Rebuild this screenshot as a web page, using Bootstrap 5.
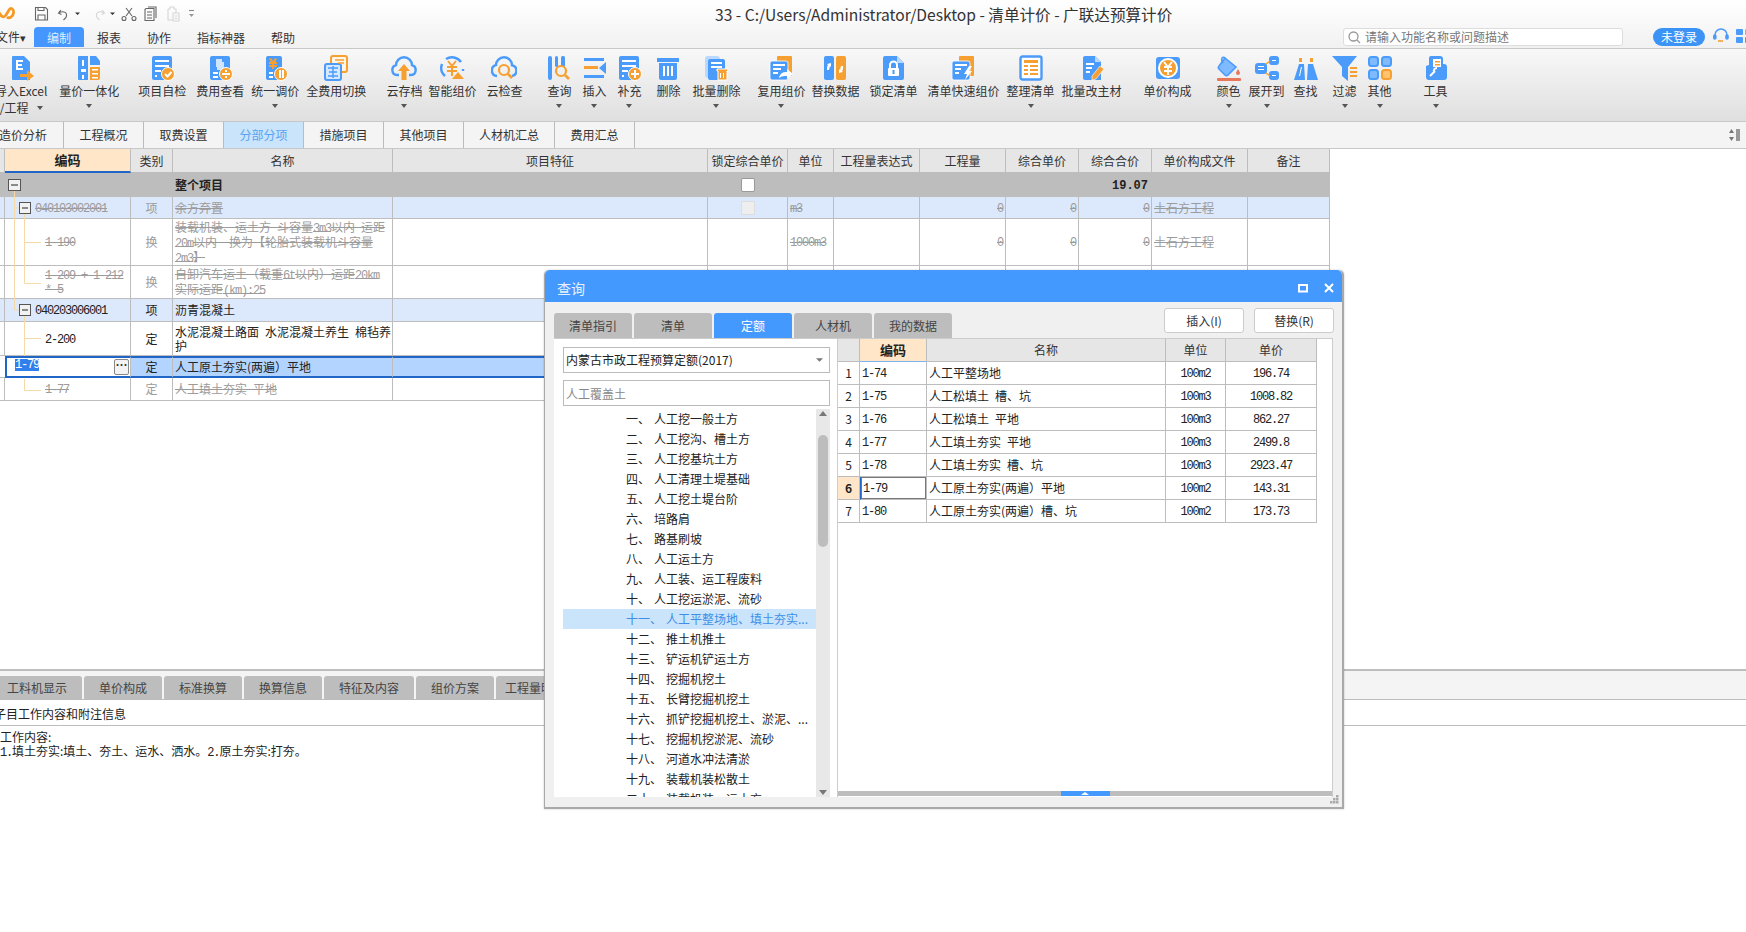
<!DOCTYPE html>
<html lang="zh-CN">
<head>
  <meta charset="UTF-8">
  <title>33 - 清单计价 - 广联达预算计价</title>
  <link href="https://cdn.jsdelivr.net/npm/bootstrap@5.3.3/dist/css/bootstrap.min.css" rel="stylesheet">
  <style>
    body{margin:0;width:1746px;height:932px;overflow:hidden;background:#fff;color:#222;font:12px/14px "Noto Sans CJK SC","Liberation Sans",sans-serif;position:relative}
    .mono{font-family:"Liberation Mono","Noto Sans CJK SC",monospace;font-size:12px;letter-spacing:-1.2px}
    span.mono{line-height:1}

    /* title + menu */
    .app-top{height:49px;background:linear-gradient(#fff,#f1f1f1);border-bottom:1px solid #c8c8c8}
    .top-row{height:27px}
    .quick-ico{margin-left:34px;width:170px;height:16px}
    .app-title{margin-left:511px;font-size:15.600px;color:#333;white-space:nowrap}
    .menu-row{height:21px}
    .menu-row .nav-link{padding:3px 0 0;color:#333;font-size:12px;line-height:15px;margin-left:26px}
    .menu-file{margin-left:-4px;width:38px;padding-top:3px;color:#333}
    .menu-row .nav-link.now{background:#4596ff;color:#dfeeff;width:50px;height:20px;margin:0 -13px 0 0;text-align:center;border-radius:4px 4px 0 0}
    .search-box{width:280px;height:18px;background:#fff;border:1px solid #ddd;border-radius:3px;color:#777;line-height:16px;padding-left:4px}
    .login-pill{width:52px;height:18px;margin-left:30px;background:#3b93f5;color:#fff;border-radius:9px;text-align:center;line-height:18px}
    .top-end{margin-right:-6px;padding-top:1px}

    /* ribbon */
    .ribbon{height:73px;background:linear-gradient(#f8f8f8,#dfdfdf);border-bottom:1px solid #c8c8c8;padding-top:6px;margin-left:-5px}
    .rb-btn{display:flex;flex-direction:column;align-items:center;white-space:nowrap;color:#333;flex:none}
    .rb-btn svg{width:26px;height:26px;display:block;margin-bottom:3px}
    .rb-caret{width:0;height:0;border:3px solid transparent;border-top:4px solid #555;border-bottom:0;margin-top:6px}
    .rb-line2{margin-top:3px}
    .g6{margin-left:6px}.g7{margin-left:7px}.g8{margin-left:8px}.g9{margin-left:9px}.g10{margin-left:10px}.g11{margin-left:11px}.g12{margin-left:12px}.g13{margin-left:13px}
    .g17{margin-left:17px}.g19{margin-left:19px}.g20{margin-left:20px}.g22{margin-left:22px}.g24{margin-left:24px}.g30{margin-left:30px}

    /* page tabs */
    .page-tabs{height:27px;background:#f4f4f4;border-bottom:1px solid #c8c8c8;position:relative}
    .page-tabs .nav-link{height:26px;line-height:26px;padding:0;width:80px;text-align:center;color:#333;border-right:1px solid #bbb}
    .page-tabs .nav-link.first{width:64px;text-align:left;text-indent:-1px}
    .page-tabs .nav-link.wide{width:91px}
    .page-tabs .nav-link.now{background:#c9e4fb;color:#5aa3f0}
    .side-ico{width:14px;height:14px}

    /* grids */
    .pj-grid{--bs-table-bg:transparent;--bs-table-color:#222;border-collapse:separate;border-spacing:0;table-layout:fixed;margin:0;font-size:12px;line-height:14px}
    .pj-grid>:not(caption)>*>*{padding:0 2px;border:0;border-right:1px solid #bdbdbd;border-bottom:1px solid #bdbdbd;color:inherit;overflow:hidden;white-space:nowrap;vertical-align:middle}
    .pj-grid>tbody>tr>td.mono{padding-top:2px}
    .pj-grid thead tr{background:#e6e6e6;color:#333}
    .pj-grid th{font-weight:400;text-align:center}
    .pj-grid>thead>tr>th.hot{background:#ffe6c8;font-weight:700;font-size:13px;color:#222}
    .grid-area{height:520px;position:relative;overflow:hidden}
    .main-grid{width:1330px}
    .main-grid>thead>tr{height:24px}
    .main-grid>thead>tr>th.hot{border-bottom:2px solid #1f66c8}
    .main-grid col:nth-child(1){width:5px}.main-grid col:nth-child(2){width:126px}.main-grid col:nth-child(3){width:42px}
    .main-grid col:nth-child(4){width:220px}.main-grid col:nth-child(5){width:315px}.main-grid col:nth-child(6){width:80px}
    .main-grid col:nth-child(7){width:46px}.main-grid col:nth-child(8){width:86px}.main-grid col:nth-child(9){width:86px}
    .main-grid col:nth-child(10){width:73px}.main-grid col:nth-child(11){width:73px}.main-grid col:nth-child(12){width:96px}.main-grid col:nth-child(13){width:82px}
    .h22{height:22px}.h23{height:23px}.h24{height:24px}.h33{height:33px}.h34{height:34px}.h47{height:47px}
    .row-root{background:#bdbdbd;font-weight:700}
    .sum-val{letter-spacing:0;padding-right:3px!important}
    .row-list{background:#dce9fc}
    .row-gone{color:#9b9b9b}
    .row-gone .strk{text-decoration:line-through}
    .kind{text-align:center}
    .code-1{padding-left:30px!important}
    .code-2{padding-left:40px!important}
    .row-sel{background:#b3d4ff}
    .pj-grid>tbody>tr.row-sel>td{border-top:2px solid #1f66c8;border-bottom:2px solid #1f66c8;vertical-align:top}
    .pj-grid>tbody>tr.row-sel>td.blank{background:#fff;border:0;border-bottom:1px solid #bdbdbd}
    .pj-grid>tbody>tr.row-sel>td.sel-code{background:#fff;border-left:2px solid #1f66c8;padding-left:8px;color:#fff}
    .pj-grid>tbody>tr.row-sel>td.mid{vertical-align:middle}
    .sel-txt{background:#2f80ed;display:inline-block;width:24px;height:12px;line-height:12px;margin-top:1px}
    .more-btn{width:15px;height:16px;line-height:10px;background:#f3f3f3;border:1px solid #888;border-radius:2px;color:#333;text-align:center;margin-top:1px;margin-right:-1px;font-weight:700}
    .chk-box{display:block;width:14px;height:14px;margin:auto;background:#fff;border:1px solid #999;border-radius:2px}
    .row-gone .chk-box{background:#eee;border-color:#ddd}
    .tree-lines{position:absolute;left:0;top:0;width:60px;height:260px}

    /* lower panel */
    .lower-tabs{height:31px;border-top:2px solid #bdbdbd;border-bottom:1px solid #bdbdbd;background:#f4f4f4;padding-top:5px;gap:2px}
    .lower-tabs .nav-link{width:78px;height:24px;line-height:24px;padding:0;background:#bdbdbd;color:#444;text-align:center;border-radius:3px 3px 0 0}
    .lower-tabs .nav-link.first{width:82px;padding-right:8px;border-radius:0 3px 0 0}
    .lower-tabs .nav-link.wider{width:90px}
    .note-head-wrap{border-bottom:1px solid #bdbdbd;height:26px;overflow:hidden}
    .note-head{height:26px;line-height:28px;margin-left:-6px;color:#222}
    .note-body{line-height:14px;padding-top:4px;color:#222}

    /* query window */
    .qd-win{position:absolute;left:544px;top:270px;width:800px;height:539px;background:#f0f0f0;border:1px solid #a9a9a9;border-width:0 2px 2px 1px;border-radius:5px 5px 0 0;box-shadow:0 0 2px rgba(0,0,0,.25);display:flex;flex-direction:column}
    .qd-title{height:32px;flex:none;background:#4499ff;color:#e8f2ff;font-size:14px;border-radius:5px 5px 0 0;padding-left:12px;padding-top:3px}
    .qd-title svg{width:10px;height:10px}
    .qd-bar{height:36px;flex:none;padding-left:9px;padding-right:8px}
    .qd-tabs{gap:2px;margin-top:11px}
    .qd-tabs .nav-link{width:78px;height:25px;line-height:25px;padding:0;background:#bdbdbd;color:#444;text-align:center;border-radius:3px 3px 0 0}
    .qd-tabs .nav-link.now{background:#4499ff;color:#fff}
    .qd-actions{gap:10px}
    .qd-btn{width:80px;height:25px;padding:0;font-size:12px;line-height:23px;background:#fff;border:1px solid #ccc;border-radius:3px;color:#333;margin-top:6px}
    .qd-main{height:459px;flex:none;margin:0 9px 0 9px;background:#fff;border-top:1px solid #ccc}
    .qd-left{width:283px;padding:8px 7px 0 9px;flex:none;display:flex;flex-direction:column;overflow:hidden}
    .qd-select{height:26px;font-size:12px;line-height:14px;padding:0 14px 0 2px;border:1px solid #bbb;border-radius:0;color:#222;background-image:url("data:image/svg+xml,%3csvg xmlns='http://www.w3.org/2000/svg' viewBox='0 0 8 4'%3e%3cpath fill='%23777' d='M0 0h8L4 4z'/%3e%3c/svg%3e");background-size:7px 4px;background-position:right 6px center;font-family:inherit}
    .qd-input{height:26px;margin-top:7px;font-size:12px;padding:0 2px;border:1px solid #bbb;border-radius:0;color:#888;font-family:inherit}
    .qd-listwrap{flex:1;min-height:0;margin-top:3px;overflow:hidden}
    .qd-list{width:253px;margin:0;overflow:hidden}
    .qd-list li{height:20px;line-height:20px;padding-left:63px;color:#222;white-space:nowrap}
    .qd-list li.now{background:#c9e4fb;color:#3f8fe8}
    .qd-scroll{width:14px;background:#e8e8e8;flex:none;position:relative}
    .qd-thumb{position:absolute;left:2px;top:26px;width:10px;height:112px;background:#bdbdbd;border-radius:5px}
    .arrow-up,.arrow-dn{position:absolute;left:3px;width:0;height:0;border:4px solid transparent}
    .arrow-up{top:2px;border-top:0;border-bottom:5px solid #777}
    .arrow-dn{bottom:2px;border-bottom:0;border-top:5px solid #777}
    .qd-right{flex:1;min-width:0;border-left:1px solid #ccc;border-right:1px solid #ccc;display:flex;flex-direction:column}
    .quota-grid{width:479px}
    .quota-grid col:nth-child(1){width:22px}.quota-grid col:nth-child(2){width:67px}.quota-grid col:nth-child(3){width:239px}.quota-grid col:nth-child(4){width:60px}.quota-grid col:nth-child(5){width:91px}
    .quota-grid tr{height:23px}
    .quota-grid>thead>tr{height:23px}
    .quota-grid>thead>tr>th.hot{border-bottom:1px solid #7db4ee}
    .quota-grid>tbody>tr>td:first-child{background:#fff;text-align:center}
    .quota-grid>tbody>tr>td.rn-now{background:#ffe6c8;font-weight:700}
    .pj-grid>tbody>tr>td.cell-now{box-shadow:inset 0 0 0 1px #777;border-left:1px solid #1f66c8}
    .h-bar{height:5px;background:#bdbdbd;margin-top:auto;margin-bottom:1px;display:flex;justify-content:center;flex:none}
    .h-thumb{width:49px;background:#4499ff;position:relative}
    .h-thumb::after{content:"";position:absolute;left:20px;top:1px;border:4px solid transparent;border-top:0;border-bottom:3px solid #fff}
    .qd-grip{position:absolute;right:3px;bottom:3px;width:9px;height:9px}
  </style>
</head>
<body>
  <svg width="0" height="0" class="d-block position-absolute">
    <defs>
      <symbol id="i-import" viewBox="0 0 26 26"><path fill="#4a9bfa" d="M5 1h11l6 6v18H5a1 1 0 0 1-1-1V2a1 1 0 0 1 1-1z"/><path fill="#fff" d="M8 5h7v2h-5v2h4v2h-4v2h5v2H8z"/><path fill="#f5a030" d="M12 19h7v-4l7 6-7 5v-4h-7z"/></symbol>
      <symbol id="i-merge" viewBox="0 0 26 26"><path fill="#4a9bfa" d="M3 1h9v24H3a1 1 0 0 1-1-1V2a1 1 0 0 1 1-1zM14 1h6l4 5v4H14z"/><path fill="#f5a030" d="M14 12h10v11a2 2 0 0 1-2 2h-8z"/><path fill="#fff" d="M6 5h2v6H6zM5 14h5v3H5zM6 20h2v4H6zM16 14h6v1.500h-6zM16 18h6v1.500h-6zM16 22h6v1.500h-6z"/></symbol>
      <symbol id="i-check" viewBox="0 0 26 26"><rect x="3" y="1" width="20" height="24" rx="2" fill="#4a9bfa"/><path fill="#fff" d="M6 5h14v2H6zM6 10h14v2H6zM6 15h6v2H6zM6 20h2v2H6z"/><circle cx="19" cy="19" r="6.500" fill="#f5a030" stroke="#fff"/><path fill="none" stroke="#fff" stroke-width="2" d="M16 19l2.500 2.500 4-4.500"/></symbol>
      <symbol id="i-fee" viewBox="0 0 26 26"><rect x="3" y="1" width="20" height="24" rx="2" fill="#4a9bfa"/><path fill="#cfe4ff" d="M9 4h6v3h2v8H10v-3H9z"/><path fill="#fff" d="M6 17h5v2H6zM6 21h5v2H6z"/><circle cx="19" cy="19" r="6.500" fill="#f5a030" stroke="#fff"/><path fill="#fff" d="M15 18h8v2h-8zM18 15h2v2h-2zM18 21h2v2h-2z"/></symbol>
      <symbol id="i-tune" viewBox="0 0 26 26"><rect x="4" y="1" width="16" height="24" rx="2" fill="#4a9bfa"/><path fill="#f5a030" d="M7 4l2-1 2 3 2-3 2 1-2 3h2v2h-3v1h3v2h-3v2h-2v-2H7v-2h3V9H7V7h2z"/><path fill="#fff" d="M7 17h4v2H7zM7 21h4v2H7z"/><circle cx="19" cy="19" r="6.500" fill="#f5a030" stroke="#fff"/><path fill="#fff" d="M17 15h2v8h-2zM20 15h2v8h-2z"/></symbol>
      <symbol id="i-allfee" viewBox="0 0 26 26"><rect x="8" y="1" width="16" height="16" rx="2" fill="#fff6e8" stroke="#f5a030" stroke-width="2"/><rect x="2" y="9" width="16" height="16" rx="2" fill="#d6e8ff" stroke="#4a9bfa" stroke-width="2"/><path fill="none" stroke="#4a9bfa" stroke-width="1.400" d="M5 13h10M6 17h8M5 21h10M10 11v12"/><path fill="none" stroke="#f5a030" stroke-width="1.400" d="M12 5h9M15 8h6"/></symbol>
      <symbol id="i-cloud" viewBox="0 0 26 26"><path fill="none" stroke="#4a9bfa" stroke-width="2.400" d="M8 20H6a5 5 0 0 1-1-9.800 8 8 0 0 1 16 0A5 5 0 0 1 20 20h-2"/><path fill="#f5a030" d="M13 9l6 7h-3.500v9h-5v-9H7z"/></symbol>
      <symbol id="i-smart" viewBox="0 0 26 26"><path fill="none" stroke="#4a9bfa" stroke-width="2.400" d="M6 21A11 11 0 0 1 3 9M7 4a11 11 0 0 1 15 3M24 14l0 2"/><path fill="none" stroke="#f5a030" stroke-width="2" d="M9 6l4 5 4-5M8 12h10M8 16h10M13 11v10"/><path fill="#f5a030" d="M19 17l6 7H13z"/></symbol>
      <symbol id="i-cloudchk" viewBox="0 0 26 26"><path fill="none" stroke="#4a9bfa" stroke-width="2.400" d="M6 21a5.500 5.500 0 0 1-1-10.800 8 8 0 0 1 16 0A5.500 5.500 0 0 1 21 21"/><circle cx="13" cy="15" r="5" fill="none" stroke="#f5a030" stroke-width="2.200"/><path stroke="#f5a030" stroke-width="2.600" d="M17 19l4 4"/></symbol>
      <symbol id="i-query" viewBox="0 0 26 26"><rect x="2" y="1" width="4" height="24" rx="2" fill="#4a9bfa"/><rect x="9" y="1" width="3" height="11" rx="1.500" fill="#4a9bfa"/><rect x="15" y="1" width="4" height="11" rx="1.500" fill="#4a9bfa"/><circle cx="15" cy="16" r="5" fill="none" stroke="#f5a030" stroke-width="2.200"/><path stroke="#f5a030" stroke-width="2.600" d="M19 20l4 4"/></symbol>
      <symbol id="i-insert" viewBox="0 0 26 26"><path fill="#4a9bfa" d="M3 3h20v3H3zM3 20h20v3H3z"/><path fill="#f5a030" d="M3 11h14v3H3z"/><path fill="#4a9bfa" d="M25 7v12l-7-6z"/></symbol>
      <symbol id="i-add" viewBox="0 0 26 26"><rect x="3" y="1" width="20" height="24" rx="2" fill="#4a9bfa"/><path fill="#fff" d="M6 5h14v2H6zM6 10h14v2H6zM6 15h6v2H6zM6 20h2v2H6z"/><circle cx="19" cy="19" r="6.500" fill="#f5a030" stroke="#fff"/><path fill="#fff" d="M15 18h8v2h-8zM18 15h2v8h-2z"/></symbol>
      <symbol id="i-del" viewBox="0 0 26 26"><path fill="#4a9bfa" d="M2 3h22v4H2zM4 8h18v15a2 2 0 0 1-2 2H6a2 2 0 0 1-2-2z"/><path fill="#fff" d="M8 11h2v10H8zM12 11h2v10h-2zM16 11h2v10h-2z"/></symbol>
      <symbol id="i-batchdel" viewBox="0 0 26 26"><rect x="2" y="1" width="15" height="22" rx="3" fill="#b9d8ff"/><rect x="5" y="4" width="17" height="21" rx="2" fill="#4a9bfa"/><path fill="#fff" d="M8 7h11v2H8zM8 11h11v2H8z"/><path fill="#f5a030" stroke="#fff" d="M14 14h11v2h-1v9H15v-9h-1z"/><path fill="#fff" d="M17 18h1v5h-1zM20 18h1v5h-1z"/></symbol>
      <symbol id="i-reuse" viewBox="0 0 26 26"><rect x="9" y="1" width="15" height="20" rx="1" fill="#f5a030"/><rect x="2" y="6" width="18" height="19" rx="2" fill="#4a9bfa" stroke="#fff" stroke-width=".8"/><path fill="#fff" d="M5 9h12v2H5zM5 13h8v2H5zM5 17h5v2H5z"/><path fill="#fff" d="M11 23c1-5 4-6 8-6v-3l6 5-6 5v-3c-3 0-5 0-8 2z"/></symbol>
      <symbol id="i-swap" viewBox="0 0 26 26"><rect x="2" y="1" width="10" height="24" rx="2" fill="#4a9bfa"/><rect x="14" y="1" width="10" height="24" rx="2" fill="#f5a030"/><path fill="#fff" d="M5 15v-3l1-2-1-1 4-1v4l-1-1-1 4zM21 11v3l-1 2 1 1-4 1v-4l1 1 1-4z"/></symbol>
      <symbol id="i-lock" viewBox="0 0 26 26"><path fill="#4a9bfa" d="M5 1h12l7 7v15a2 2 0 0 1-2 2H5a2 2 0 0 1-2-2V3a2 2 0 0 1 2-2z"/><path fill="#b9d8ff" d="M17 1l7 7h-7z"/><path fill="none" stroke="#fff" stroke-width="2" d="M10 13V10a3.500 3.500 0 0 1 7 0v3"/><rect x="8" y="13" width="11" height="8" rx="1" fill="#fff"/><rect x="12.500" y="15" width="2" height="4" fill="#4a9bfa"/></symbol>
      <symbol id="i-quick" viewBox="0 0 26 26"><rect x="9" y="1" width="15" height="20" rx="1" fill="#f5a030"/><rect x="2" y="6" width="18" height="19" rx="2" fill="#4a9bfa" stroke="#fff" stroke-width=".8"/><path fill="#fff" d="M5 9h12v2H5zM5 13h6v2H5zM5 17h4v2H5zM19 11l-5 8h3l-2 6 7-9h-3l3-5z"/></symbol>
      <symbol id="i-tidy" viewBox="0 0 26 26"><rect x="2.500" y="1.500" width="21" height="23" rx="2" fill="#fff" stroke="#4a9bfa" stroke-width="2.400"/><path fill="#f5a030" d="M6 5h14v3H6zM6 10h4v2H6zM12 10h8v2h-8zM6 14h4v2H6zM12 14h8v2h-8zM6 18h4v2H6zM12 18h8v2h-8z"/></symbol>
      <symbol id="i-batchmain" viewBox="0 0 26 26"><path fill="#4a9bfa" d="M6 1h10l6 6v18H6a2 2 0 0 1-2-2V3a2 2 0 0 1 2-2z"/><path fill="#b9d8ff" d="M16 1l6 6h-6z"/><path fill="#fff" d="M7 8h8v2H7zM7 12h6v2H7zM7 16h4v2H7z"/><path fill="#f5a030" stroke="#fff" stroke-width=".6" d="M21 11l4 3-8 10-4 1 0-4z"/></symbol>
      <symbol id="i-unit" viewBox="0 0 26 26"><path fill="#4a9bfa" d="M4 2h18a3 3 0 0 1 3 3v16a3 3 0 0 1-3 3H4a3 3 0 0 1-3-3V5a3 3 0 0 1 3-3z"/><circle cx="13" cy="13" r="10" fill="#fff"/><circle cx="13" cy="13" r="8" fill="#f5a030"/><path fill="none" stroke="#fff" stroke-width="1.800" d="M9 7l4 5 4-5M9 12h8M9 16h8M13 12v8"/></symbol>
      <symbol id="i-color" viewBox="0 0 26 26"><path fill="#7fbaff" stroke="#4a9bfa" stroke-width="1.600" d="M9 3l11 9-8 8a2 2 0 0 1-3 0l-6-6a2 2 0 0 1 0-3z"/><path fill="none" stroke="#4a9bfa" stroke-width="1.600" d="M9 3C7 1 4 3 7 8"/><path fill="#e8775a" d="M22 14c1 2 2 3 2 4a2 2 0 0 1-4 0c0-1 1-2 2-4z"/><rect x="1" y="23" width="24" height="3" rx="1" fill="#e8775a"/></symbol>
      <symbol id="i-expand" viewBox="0 0 26 26"><rect x="1" y="8" width="12" height="11" rx="3" fill="#4a9bfa"/><rect x="15" y="1" width="10" height="9" rx="3" fill="#4a9bfa"/><rect x="15" y="16" width="10" height="9" rx="3" fill="#4a9bfa"/><path fill="#fff" d="M4 11h6v1H4zM4 14h6v1H4zM18 5h4v1h-4zM18 20h4v1h-4z"/><path stroke="#f5a030" stroke-width="1.500" d="M12 9l4-3M12 18l4 3"/></symbol>
      <symbol id="i-find" viewBox="0 0 26 26"><path fill="#4a9bfa" d="M6 9h5l1 16H1zM15 9h5l5 16H14z"/><path fill="#f5a030" d="M6 3h3v4H6zM17 3h3v4h-3z"/><path fill="#fff" d="M8 12h1l-2 9H6z"/></symbol>
      <symbol id="i-filter" viewBox="0 0 26 26"><path fill="#4a9bfa" d="M0 1h25l-9 11v14l-6-5v-9z"/><path fill="#f5a030" d="M18 12h7v2h-7zM18 16h7v2h-7zM18 20h7v2h-7z"/></symbol>
      <symbol id="i-other" viewBox="0 0 26 26"><g stroke-width="2"><rect x="2" y="2" width="9" height="9" rx="2.500" fill="#7fbaff" stroke="#4a9bfa"/><rect x="15" y="2" width="9" height="9" rx="2.500" fill="#7fbaff" stroke="#4a9bfa"/><rect x="2" y="15" width="9" height="9" rx="2.500" fill="#7fbaff" stroke="#4a9bfa"/><rect x="15" y="15" width="9" height="9" rx="2.500" fill="#ffc46d" stroke="#f5a030"/></g></symbol>
      <symbol id="i-tool" viewBox="0 0 26 26"><path fill="#4a9bfa" d="M8 1h9a3 3 0 0 1 3 3v5h1a3 3 0 0 1 3 3v10a3 3 0 0 1-3 3H6a3 3 0 0 1-3-3V11l3-1V3a2 2 0 0 1 2-2z"/><path fill="#fff" d="M10 4h8v8h-8z"/><path fill="#f5a030" d="M12 6h5v1.500h-5zM12 9h5v1.500h-5z"/><path fill="none" stroke="#fff" stroke-width="2" d="M7 21l5-5M14 13a3 3 0 0 0-3 4"/></symbol>
    </defs>
  </svg>

  <!-- title + menu -->
  <header class="app-top">
    <div class="top-row d-flex align-items-center">
      <svg width="15" height="17" viewBox="0 0 15 17" class="position-absolute top-0 start-0 mt-1"><path fill="none" stroke="#f59a23" stroke-width="2.800" d="M-2 7C1 12 3 15 6 11L9 6C11 3 14 5 13.500 9 13 13 9 15 7 13"/></svg>
      <svg class="quick-ico flex-none" viewBox="0 0 170 16">
        <g fill="none" stroke="#666" stroke-width="1.100">
          <path d="M1.500 1.500h10l2 2v10.500h-12zM4 14V9h7v5M4 1.500v3h6v-3"/>
          <path transform="translate(2)" d="M25 4l-2.500 3 3 1.500M23 6.500c5-2 9 0 7 5l-2.500 2.500"/>
          <path stroke="#d6d6d6" d="M68 4l2.500 3-3 1.500M70 6.500c-5-2-9 0-7 5l2.500 2.500"/>
          <path d="M92 2l6 8M98 2l-6 8"/><circle cx="90" cy="12.500" r="2"/><circle cx="100" cy="12.500" r="2"/>
          <path transform="translate(-3)" d="M115 2.500h8v12h-9v-11zM117 1h8v11M116 6h5M116 9h5M116 12h5"/>
          <path transform="translate(-2)" stroke="#d6d6d6" d="M136 3h2v-2h4v2h2v4M136 3v11h5M141 7h6v8h-6zM142.500 10h3M142.500 12.500h3"/>
          <path stroke="#888" transform="translate(-1)" d="M156 4.500h5"/>
        </g>
        <path fill="#333" d="M41 6.500h5l-2.500 2.500zM76 6.500h5l-2.500 2.500z"/>
        <path fill="#999" transform="translate(-1)" d="M156 8h5l-2.500 3z"/>
      </svg>
      <span class="app-title">33 - C:/Users/Administrator/Desktop - 清单计价 - 广联达预算计价</span>
    </div>
    <div class="menu-row d-flex">
      <div class="menu-file text-nowrap">文件<span class="small">▾</span></div>
      <ul class="nav flex-nowrap">
        <li><a class="nav-link now" href="#">编制</a></li>
        <li><a class="nav-link" href="#">报表</a></li>
        <li><a class="nav-link" href="#">协作</a></li>
        <li><a class="nav-link" href="#">指标神器</a></li>
        <li><a class="nav-link" href="#">帮助</a></li>
      </ul>
      <div class="top-end ms-auto d-flex align-items-start">
        <div class="search-box d-flex align-items-center gap-1">
          <svg width="13" height="13" viewBox="0 0 13 13" fill="none" stroke="#999" stroke-width="1.300"><circle cx="5.500" cy="5.500" r="4.500"/><path d="M9 9l3 3"/></svg>
          <span>请输入功能名称或问题描述</span>
        </div>
        <div class="login-pill">未登录</div>
        <svg width="16" height="16" viewBox="0 0 16 16" class="ms-2" fill="none" stroke="#4a9bfa" stroke-width="1.600"><path d="M2 10V7a6 6 0 0 1 12 0v3"/><rect x=".8" y="7" width="2" height="4" rx="1" fill="#4a9bfa"/><rect x="13" y="7" width="2" height="4" rx="1" fill="#4a9bfa"/><path stroke="#f5a030" d="M5 13h5"/></svg>
        <svg width="16" height="16" viewBox="0 0 16 16" class="g7"><rect x="0" y="1" width="7" height="6" rx="1" fill="#4a9bfa"/><rect x="9" y="1" width="7" height="6" rx="1" fill="#f5a030"/><rect x="0" y="9" width="7" height="6" rx="1" fill="#4a9bfa"/><rect x="9" y="9" width="7" height="6" rx="1" fill="#4a9bfa"/></svg>
      </div>
    </div>
  </header>

  <!-- ribbon -->
  <div class="ribbon d-flex">
    <div class="rb-btn"><svg><use href="#i-import"/></svg><span>导入Excel</span><span class="d-flex align-items-center gap-2 rb-line2"><span>/工程</span><span class="rb-caret mt-0"></span></span></div>
    <div class="rb-btn g12"><svg><use href="#i-merge"/></svg><span>量价一体化</span><span class="rb-caret"></span></div>
    <div class="rb-btn g19"><svg><use href="#i-check"/></svg><span>项目自检</span></div>
    <div class="rb-btn g10"><svg><use href="#i-fee"/></svg><span>费用查看</span></div>
    <div class="rb-btn g7"><svg><use href="#i-tune"/></svg><span>统一调价</span><span class="rb-caret"></span></div>
    <div class="rb-btn g7"><svg><use href="#i-allfee"/></svg><span>全费用切换</span></div>
    <div class="rb-btn g20"><svg><use href="#i-cloud"/></svg><span>云存档</span><span class="rb-caret"></span></div>
    <div class="rb-btn g6"><svg><use href="#i-smart"/></svg><span>智能组价</span></div>
    <div class="rb-btn g10"><svg><use href="#i-cloudchk"/></svg><span>云检查</span></div>
    <div class="rb-btn g24"><svg><use href="#i-query"/></svg><span>查询</span><span class="rb-caret"></span></div>
    <div class="rb-btn g9"><svg><use href="#i-insert"/></svg><span>插入</span><span class="rb-caret"></span></div>
    <div class="rb-btn g9"><svg><use href="#i-add"/></svg><span>补充</span><span class="rb-caret"></span></div>
    <div class="rb-btn g13"><svg><use href="#i-del"/></svg><span>删除</span></div>
    <div class="rb-btn g11"><svg><use href="#i-batchdel"/></svg><span>批量删除</span><span class="rb-caret"></span></div>
    <div class="rb-btn g17"><svg><use href="#i-reuse"/></svg><span>复用组价</span><span class="rb-caret"></span></div>
    <div class="rb-btn g6"><svg><use href="#i-swap"/></svg><span>替换数据</span></div>
    <div class="rb-btn g10"><svg><use href="#i-lock"/></svg><span>锁定清单</span></div>
    <div class="rb-btn g10"><svg><use href="#i-quick"/></svg><span>清单快速组价</span></div>
    <div class="rb-btn g7"><svg><use href="#i-tidy"/></svg><span>整理清单</span><span class="rb-caret"></span></div>
    <div class="rb-btn g7"><svg><use href="#i-batchmain"/></svg><span>批量改主材</span></div>
    <div class="rb-btn g22"><svg><use href="#i-unit"/></svg><span>单价构成</span></div>
    <div class="rb-btn g24"><svg><use href="#i-color"/></svg><span>颜色</span><span class="rb-caret"></span></div>
    <div class="rb-btn g7"><svg><use href="#i-expand"/></svg><span>展开到</span><span class="rb-caret"></span></div>
    <div class="rb-btn g8"><svg><use href="#i-find"/></svg><span>查找</span></div>
    <div class="rb-btn g13"><svg><use href="#i-filter"/></svg><span>过滤</span><span class="rb-caret"></span></div>
    <div class="rb-btn g9"><svg><use href="#i-other"/></svg><span>其他</span><span class="rb-caret"></span></div>
    <div class="rb-btn g30"><svg><use href="#i-tool"/></svg><span>工具</span><span class="rb-caret"></span></div>
  </div>

  <!-- page tabs -->
  <div class="page-tabs d-flex align-items-center">
    <ul class="nav flex-nowrap flex-grow-1">
      <li><a class="nav-link first" href="#">造价分析</a></li>
      <li><a class="nav-link" href="#">工程概况</a></li>
      <li><a class="nav-link" href="#">取费设置</a></li>
      <li><a class="nav-link now" href="#">分部分项</a></li>
      <li><a class="nav-link" href="#">措施项目</a></li>
      <li><a class="nav-link" href="#">其他项目</a></li>
      <li><a class="nav-link wide" href="#">人材机汇总</a></li>
      <li><a class="nav-link" href="#">费用汇总</a></li>
    </ul>
    <svg class="side-ico me-1" viewBox="0 0 14 14"><path fill="#777" d="M1 5l2.500-4L6 5zM1 9l2.500 4L6 9z"/><rect x="8" y="1" width="4" height="12" fill="#999"/></svg>
  </div>

  <!-- main grid -->
  <div class="grid-area">
    <table class="table pj-grid main-grid">
      <colgroup><col><col><col><col><col><col><col><col><col><col><col><col><col></colgroup>
      <thead>
        <tr><th></th><th class="hot">编码</th><th>类别</th><th>名称</th><th>项目特征</th><th>锁定综合单价</th><th>单位</th><th>工程量表达式</th><th>工程量</th><th>综合单价</th><th>综合合价</th><th>单价构成文件</th><th>备注</th></tr>
      </thead>
      <tbody>
        <tr class="row-root h24"><td></td><td></td><td></td><td>整个项目</td><td></td><td><span class="chk-box"></span></td><td></td><td></td><td></td><td></td><td class="text-end mono sum-val">19.07</td><td></td><td></td></tr>
        <tr class="row-list row-gone h22"><td></td><td class="code-1 mono strk">040103002001</td><td class="kind">项</td><td class="strk">余方弃置</td><td></td><td><span class="chk-box"></span></td><td class="mono strk">m3</td><td></td><td class="text-end mono strk">0</td><td class="text-end mono strk">0</td><td class="text-end mono strk">0</td><td class="strk">土石方工程</td><td></td></tr>
        <tr class="row-gone h47"><td></td><td class="code-2 mono strk">1-190</td><td class="kind">换</td><td class="strk">装载机装、运土方&ensp;斗容量<span class="mono">3m3</span>以内&ensp;运距<br><span class="mono">20m</span>以内&ensp;&ensp;换为【轮胎式装载机斗容量<br><span class="mono">2m3</span>】</td><td></td><td></td><td class="mono strk">1000m3</td><td></td><td class="text-end mono strk">0</td><td class="text-end mono strk">0</td><td class="text-end mono strk">0</td><td class="strk">土石方工程</td><td></td></tr>
        <tr class="row-gone h33"><td></td><td class="code-2 mono strk">1-209 + 1-212<br>* 5</td><td class="kind">换</td><td class="strk">自卸汽车运土（载重<span class="mono">6t</span>以内）运距<span class="mono">20km</span><br>实际运距<span class="mono">(km):25</span></td><td></td><td></td><td></td><td></td><td></td><td></td><td></td><td></td><td></td></tr>
        <tr class="row-list h23"><td></td><td class="code-1 mono">040203006001</td><td class="kind">项</td><td>沥青混凝土</td><td></td><td></td><td></td><td></td><td></td><td></td><td></td><td></td><td></td></tr>
        <tr class="h34"><td></td><td class="code-2 mono">2-200</td><td class="kind">定</td><td>水泥混凝土路面&ensp;水泥混凝土养生&ensp;棉毡养<br>护</td><td></td><td></td><td></td><td></td><td></td><td></td><td></td><td></td><td></td></tr>
        <tr class="row-sel h22"><td class="blank"></td><td class="sel-code"><div class="d-flex justify-content-between"><span class="sel-txt mono">1-79</span><span class="more-btn">…</span></div></td><td class="kind mid">定</td><td class="mid">人工原土夯实(两遍）平地</td><td></td><td></td><td></td><td></td><td></td><td></td><td></td><td></td><td></td></tr>
        <tr class="row-gone h23"><td></td><td class="code-2 mono strk">1-77</td><td class="kind">定</td><td class="strk">人工填土夯实&ensp;平地</td><td></td><td></td><td></td><td></td><td></td><td></td><td></td><td></td><td></td></tr>
      </tbody>
    </table>
    <!-- tree connectors and expanders sit over the first column -->
    <svg class="tree-lines" viewBox="0 149 60 260">
      <g fill="none" stroke="#f5d9a8" stroke-width="1">
        <path d="M14.500 190V310M14.500 208H19M14.500 310H19"/>
        <path d="M24.500 213V283M24.500 242.500H41M24.500 283.500H41"/>
        <path d="M24.500 316V356M24.500 338.500H41M24.500 379V390.500H41"/>
      </g>
      <g fill="#f2f2f2" stroke="#555">
        <rect x="8.500" y="179.500" width="12" height="11"/>
        <rect x="19.500" y="202.500" width="11" height="11"/>
        <rect x="19.500" y="304.500" width="11" height="11"/>
      </g>
      <path stroke="#222" d="M11 185h7M22 208h6M22 310h6"/>
    </svg>
  </div>

  <!-- lower panel -->
  <ul class="nav lower-tabs flex-nowrap overflow-hidden">
    <li><a class="nav-link first" href="#">工料机显示</a></li>
    <li><a class="nav-link" href="#">单价构成</a></li>
    <li><a class="nav-link" href="#">标准换算</a></li>
    <li><a class="nav-link" href="#">换算信息</a></li>
    <li><a class="nav-link wider" href="#">特征及内容</a></li>
    <li><a class="nav-link" href="#">组价方案</a></li>
    <li><a class="nav-link" href="#">工程量明细</a></li>
  </ul>
  <div class="note-head-wrap"><div class="note-head">子目工作内容和附注信息</div></div>
  <div class="note-body">
    <div>工作内容:</div>
    <div class="ms-n1"><span class="mono">1.</span>填土夯实:填土、夯土、运水、洒水。<span class="mono">2.</span>原土夯实:打夯。</div>
  </div>

  <!-- query window -->
  <section class="qd-win">
    <div class="qd-title d-flex align-items-center">
      <span>查询</span>
      <svg class="ms-auto" viewBox="0 0 10 10"><rect x="1" y="2" width="8" height="6.500" fill="none" stroke="#fff" stroke-width="2"/></svg>
      <svg class="ms-3 me-2" viewBox="0 0 10 10"><path stroke="#fff" stroke-width="2" d="M1 1l8 8M9 1l-8 8"/></svg>
    </div>
    <div class="qd-bar d-flex justify-content-between">
      <ul class="nav qd-tabs flex-nowrap">
        <li><a class="nav-link" href="#">清单指引</a></li>
        <li><a class="nav-link" href="#">清单</a></li>
        <li><a class="nav-link now" href="#">定额</a></li>
        <li><a class="nav-link" href="#">人材机</a></li>
        <li><a class="nav-link" href="#">我的数据</a></li>
      </ul>
      <div class="d-flex qd-actions">
        <button class="btn qd-btn" type="button">插入(I)</button>
        <button class="btn qd-btn" type="button">替换(R)</button>
      </div>
    </div>
    <div class="qd-main d-flex">
      <div class="qd-left">
        <select class="form-select qd-select"><option>内蒙古市政工程预算定额(2017)</option></select>
        <input class="form-control qd-input" type="text" value="人工覆盖土">
        <div class="qd-listwrap d-flex">
          <ul class="list-unstyled qd-list">
            <li><span class="me-1">一、</span>人工挖一般土方</li>
            <li><span class="me-1">二、</span>人工挖沟、槽土方</li>
            <li><span class="me-1">三、</span>人工挖基坑土方</li>
            <li><span class="me-1">四、</span>人工清理土堤基础</li>
            <li><span class="me-1">五、</span>人工挖土堤台阶</li>
            <li><span class="me-1">六、</span>培路肩</li>
            <li><span class="me-1">七、</span>路基刷坡</li>
            <li><span class="me-1">八、</span>人工运土方</li>
            <li><span class="me-1">九、</span>人工装、运工程废料</li>
            <li><span class="me-1">十、</span>人工挖运淤泥、流砂</li>
            <li class="now"><span class="me-1">十一、</span>人工平整场地、填土夯实...</li>
            <li><span class="me-1">十二、</span>推土机推土</li>
            <li><span class="me-1">十三、</span>铲运机铲运土方</li>
            <li><span class="me-1">十四、</span>挖掘机挖土</li>
            <li><span class="me-1">十五、</span>长臂挖掘机挖土</li>
            <li><span class="me-1">十六、</span>抓铲挖掘机挖土、淤泥、...</li>
            <li><span class="me-1">十七、</span>挖掘机挖淤泥、流砂</li>
            <li><span class="me-1">十八、</span>河道水冲法清淤</li>
            <li><span class="me-1">十九、</span>装载机装松散土</li>
            <li><span class="me-1">二十、</span>装载机装、运土方</li>
          </ul>
          <div class="qd-scroll"><span class="arrow-up"></span><span class="qd-thumb"></span><span class="arrow-dn"></span></div>
        </div>
      </div>
      <div class="qd-right">
        <table class="table pj-grid quota-grid">
          <colgroup><col><col><col><col><col></colgroup>
          <thead><tr><th></th><th class="hot">编码</th><th>名称</th><th>单位</th><th>单价</th></tr></thead>
          <tbody>
            <tr><td>1</td><td class="mono">1-74</td><td>人工平整场地</td><td class="text-center mono">100m2</td><td class="text-center mono">196.74</td></tr>
            <tr><td>2</td><td class="mono">1-75</td><td>人工松填土&ensp;槽、坑</td><td class="text-center mono">100m3</td><td class="text-center mono">1008.82</td></tr>
            <tr><td>3</td><td class="mono">1-76</td><td>人工松填土&ensp;平地</td><td class="text-center mono">100m3</td><td class="text-center mono">862.27</td></tr>
            <tr><td>4</td><td class="mono">1-77</td><td>人工填土夯实&ensp;平地</td><td class="text-center mono">100m3</td><td class="text-center mono">2499.8</td></tr>
            <tr><td>5</td><td class="mono">1-78</td><td>人工填土夯实&ensp;槽、坑</td><td class="text-center mono">100m3</td><td class="text-center mono">2923.47</td></tr>
            <tr><td class="rn-now">6</td><td class="mono cell-now">1-79</td><td>人工原土夯实(两遍）平地</td><td class="text-center mono">100m2</td><td class="text-center mono">143.31</td></tr>
            <tr><td>7</td><td class="mono">1-80</td><td>人工原土夯实(两遍）槽、坑</td><td class="text-center mono">100m2</td><td class="text-center mono">173.73</td></tr>
          </tbody>
        </table>
        <div class="h-bar"><span class="h-thumb"></span></div>
      </div>
    </div>
    <svg class="qd-grip" viewBox="0 0 9 9"><path fill="#aaa" d="M6 0h2.500v2.500H6zM3 3h2.500v2.500H3zM6 3h2.500v2.500H6zM0 6h2.500v2.500H0zM3 6h2.500v2.500H3zM6 6h2.500v2.500H6z"/></svg>
  </section>

  <script src="https://cdn.jsdelivr.net/npm/bootstrap@5.3.3/dist/js/bootstrap.bundle.min.js"></script>
</body>
</html>
